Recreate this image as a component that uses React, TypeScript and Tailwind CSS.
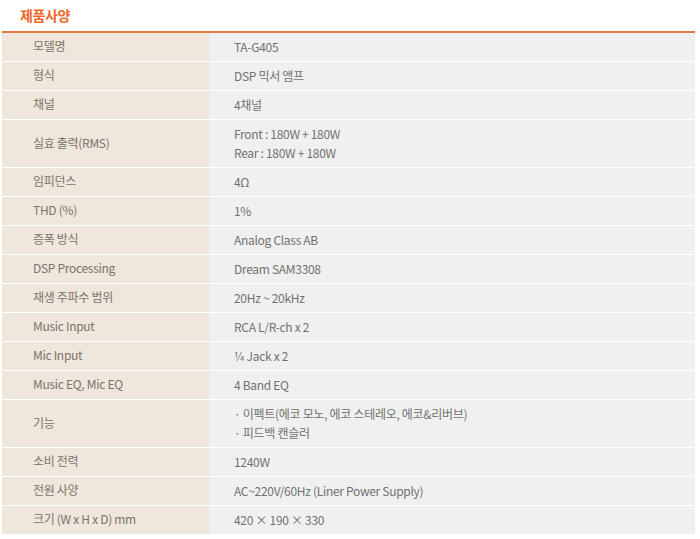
const specs: { label: string; value: string[] }[] = [
  { label: "모델명", value: ["TA-G405"] },
  { label: "형식", value: ["DSP 믹서 앰프"] },
  { label: "채널", value: ["4채널"] },
  { label: "실효 출력(RMS)", value: ["Front : 180W + 180W", "Rear : 180W + 180W"] },
  { label: "임피던스", value: ["4Ω"] },
  { label: "THD (%)", value: ["1%"] },
  { label: "증폭 방식", value: ["Analog Class AB"] },
  { label: "DSP Processing", value: ["Dream SAM3308"] },
  { label: "재생 주파수 범위", value: ["20Hz ~ 20kHz"] },
  { label: "Music Input", value: ["RCA L/R-ch x 2"] },
  { label: "Mic Input", value: ["¼ Jack x 2"] },
  { label: "Music EQ, Mic EQ", value: ["4 Band EQ"] },
  { label: "기능", value: ["· 이펙트(에코 모노, 에코 스테레오, 에코&리버브)", "· 피드백 캔슬러"] },
  { label: "소비 전력", value: ["1240W"] },
  { label: "전원 사양", value: ["AC~220V/60Hz (Liner Power Supply)"] },
  { label: "크기 (W x H x D) mm", value: ["420 × 190 × 330"] },
];

export default function App() {
  return (
    <div className="w-[700px] h-[539px] bg-white overflow-hidden font-['Noto_Sans_CJK_KR','Noto_Sans',sans-serif]">
      {/* Title */}
      <div className="h-[31px] pl-[20px] flex items-center">
        <h2 className="text-[14px] font-bold text-[#f0652b] tracking-[-0.4px]">제품사양</h2>
      </div>

      {/* Spec table */}
      <div className="ml-[2px] w-[693px] border-t-2 border-[#e8793f]">
        {specs.map((row) => (
          <div
            key={row.label}
            className={`flex border-b border-white ${row.value.length > 1 ? "h-[48px]" : "h-[29px]"}`}
          >
            <div className="w-[207px] shrink-0 bg-[#efe6dc] pl-[31px] pb-[2px] flex items-center text-[12px] text-[#7d7269] tracking-[-0.3px]">
              {row.label}
            </div>
            <div className="flex-1 bg-[#f0f0f0] pl-[25px] pb-[2px] flex flex-col justify-center text-[12px] leading-[19px] text-[#707070] tracking-[-0.3px]">
              {row.value.map((line) => (
                <span key={line}>{line}</span>
              ))}
            </div>
          </div>
        ))}
      </div>
    </div>
  );
}
